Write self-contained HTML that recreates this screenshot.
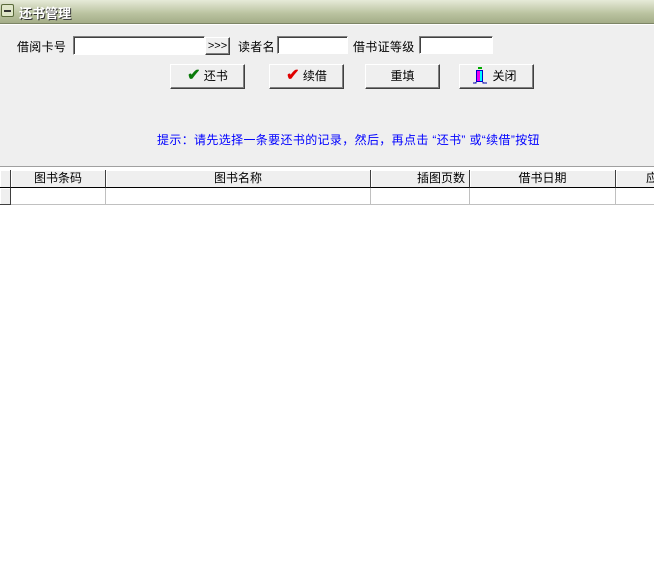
<!DOCTYPE html>
<html><head><meta charset="utf-8"><style>
body{margin:0;width:654px;height:575px;overflow:hidden;background:#fff;font-family:"Liberation Sans","WenQuanYi Zen Hei","Noto Sans CJK SC",sans-serif;font-size:12px;color:#000;position:relative}
.a{position:absolute}
.title{left:0;top:0;width:654px;height:23px;background:linear-gradient(#e6ead8,#b9c29f 60%,#a4ad88);border-bottom:1px solid #7d8566}
.body{left:0;top:24px;width:654px;height:143px;background:#efefef;border-top:1px solid #fff}
.inp{background:#fff;border:1px solid;border-color:#808080 #fff #fff #808080;box-shadow:inset 1px 1px 0 #404040;box-sizing:border-box}
.btn{background:#efefef;border:1px solid;border-color:#fff #404040 #404040 #fff;box-shadow:inset -1px -1px 0 #808080;box-sizing:border-box;text-align:center;line-height:22px;font-size:12px}
.hd{top:170px;height:18px;border-right:1px solid #404040;border-bottom:1px solid #000;box-sizing:border-box;background:#efefef;text-align:center;line-height:17px;box-shadow:inset 1px 1px 0 #fff}
.cl{top:188px;height:17px;border-right:1px solid #c0c0c0;border-bottom:1px solid #c0c0c0;box-sizing:border-box}
</style></head><body>
<div class="a title"></div>
<div class="a" style="left:1px;top:4px;width:13px;height:13px;background:#dfe6c8;border:1px solid #5a6a3a;border-radius:2px;box-sizing:border-box"><div style="margin:5px 2px 0;height:2px;background:#333"></div></div>
<div class="a" style="left:19px;top:3px;font-size:13px;font-weight:bold;color:#fff;text-shadow:1px 1px 0 #333">还书管理</div>
<div class="a body"></div>
<div class="a" style="left:17px;top:38px;letter-spacing:0.3px">借阅卡号</div>
<div class="a inp" style="left:73px;top:36px;width:132px;height:19px"></div>
<div class="a btn" style="left:205px;top:37px;width:25px;height:18px;line-height:16px;font-size:11px">&gt;&gt;&gt;</div>
<div class="a" style="left:238px;top:38px;letter-spacing:0.3px">读者名</div>
<div class="a inp" style="left:277px;top:36px;width:71px;height:18px"></div>
<div class="a" style="left:353px;top:38px;letter-spacing:0.3px">借书证等级</div>
<div class="a inp" style="left:419px;top:36px;width:74px;height:18px"></div>
<div class="a btn" style="left:170px;top:64px;width:75px;height:25px"><span style="color:#0a7a0a;font-weight:bold;font-size:16px">✔</span> 还书</div>
<div class="a btn" style="left:269px;top:64px;width:75px;height:25px"><span style="color:#e00000;font-weight:bold;font-size:16px">✔</span> 续借</div>
<div class="a btn" style="left:365px;top:64px;width:75px;height:25px">重填</div>
<div class="a btn" style="left:459px;top:64px;width:75px;height:25px;padding-left:16px">关闭</div>
<svg class="a" style="left:472px;top:67px" width="16" height="18"><rect x="6" y="0" width="4" height="2" fill="#0a0"/><rect x="4" y="3" width="7" height="12" fill="#00c"/><rect x="5" y="4" width="3" height="10" fill="#e0e"/><rect x="8" y="4" width="2" height="10" fill="#0ff"/><path d="M1 16H4V15M11 15V16H15" stroke="#00a" fill="none"/></svg>
<div class="a" style="left:157px;top:131px;color:#0000ff;letter-spacing:0.35px">提示：请先选择一条要还书的记录，然后，再点击 “还书” 或“续借”按钮</div>
<div class="a" style="left:0;top:166px;width:654px;height:1px;background:#a0a0a0"></div>
<div class="a" style="left:0;top:167px;width:654px;height:2px;background:#fff"></div>
<div class="a hd" style="left:0;width:11px"></div>
<div class="a hd" style="left:11px;width:95px">图书条码</div>
<div class="a hd" style="left:106px;width:265px">图书名称</div>
<div class="a hd" style="left:371px;width:99px;text-align:right;padding-right:4px">插图页数</div>
<div class="a hd" style="left:470px;width:146px">借书日期</div>
<div class="a hd" style="left:616px;width:50px;text-align:left;padding-left:30px">应</div>
<div class="a" style="left:0;top:188px;width:11px;height:17px;background:#efefef;border-right:1px solid #404040;border-bottom:1px solid #404040;box-sizing:border-box;box-shadow:inset 1px 1px 0 #fff"></div>
<div class="a cl" style="left:11px;width:95px"></div>
<div class="a cl" style="left:106px;width:265px"></div>
<div class="a cl" style="left:371px;width:99px"></div>
<div class="a cl" style="left:470px;width:146px"></div>
<div class="a cl" style="left:616px;width:40px;border-right:none"></div>
</body></html>
